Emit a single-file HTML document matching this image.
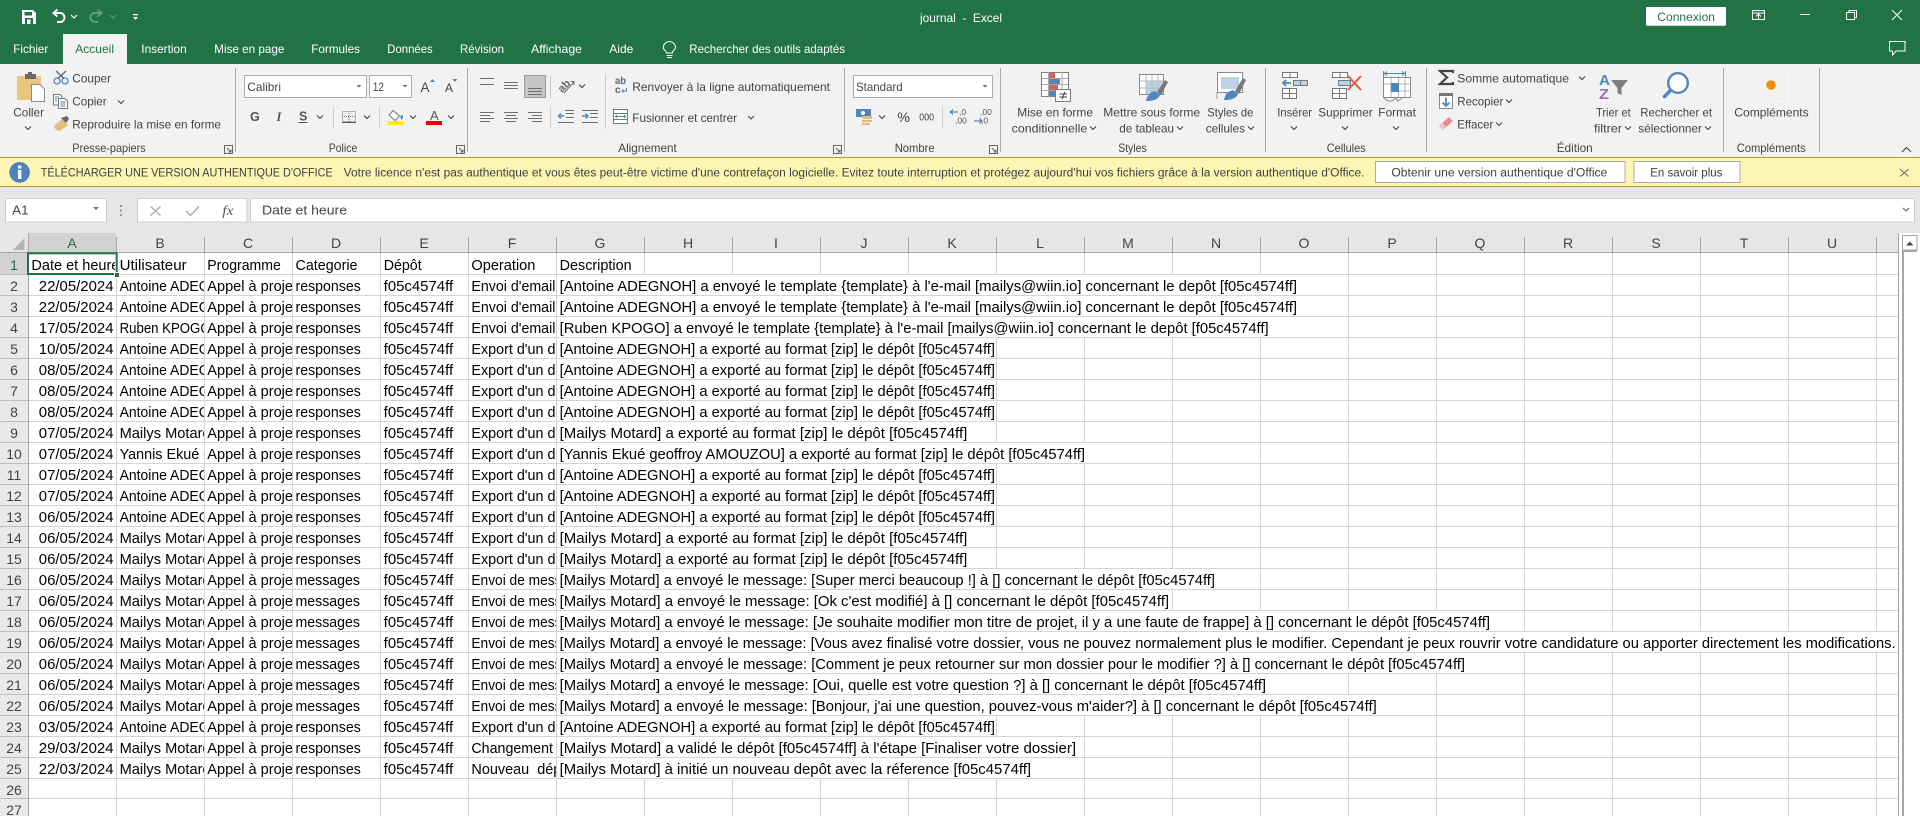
<!DOCTYPE html>
<html lang="fr">
<head>
<meta charset="utf-8">
<title>journal - Excel</title>
<style>
html,body{margin:0;padding:0;width:1920px;height:816px;overflow:hidden;background:#fff}
svg{display:block}
text{font-family:"Liberation Sans",sans-serif;white-space:pre}
.ui text{font-size:12px;fill:#444}
.grid text{font-size:14.4px;fill:#000}
.hd text{font-size:14px;fill:#444;text-anchor:middle}
</style>
</head>
<body>
<svg xmlns="http://www.w3.org/2000/svg" width="1920" height="816" viewBox="0 0 1920 816">
<defs>
<clipPath id="cA"><rect x="29" y="254" width="86" height="20"/></clipPath>
<clipPath id="cB"><rect x="117" y="254" width="87" height="525"/></clipPath>
<clipPath id="cC"><rect x="205" y="254" width="87" height="525"/></clipPath>
<clipPath id="cF"><rect x="469" y="254" width="87" height="525"/></clipPath>
</defs>

<!-- backgrounds -->
<rect width="1920" height="64" fill="#217346"/>
<rect y="64" width="1920" height="93" fill="#f2f2f2"/>
<rect x="63" y="34" width="64" height="30" fill="#f2f2f2"/>
<rect y="157" width="1920" height="30" fill="#fdf5b4"/>
<rect y="157" width="1920" height="1" fill="#b59a3c"/>
<rect y="186" width="1920" height="1" fill="#b59a3c"/>
<rect y="187" width="1920" height="46" fill="#e6e6e6"/>

<!-- title bar text and tabs -->
<g class="ui">
<g style="fill:#fff">
<text x="920" y="22" textLength="82" lengthAdjust="spacingAndGlyphs" fill="#fff" style="fill:#fff">journal  -  Excel</text>
<text x="13.3" y="53" textLength="35" lengthAdjust="spacingAndGlyphs" style="fill:#fff">Fichier</text>
<text x="141.3" y="53" textLength="45.4" lengthAdjust="spacingAndGlyphs" style="fill:#fff">Insertion</text>
<text x="214.3" y="53" textLength="70" lengthAdjust="spacingAndGlyphs" style="fill:#fff">Mise en page</text>
<text x="311.3" y="53" textLength="48.7" lengthAdjust="spacingAndGlyphs" style="fill:#fff">Formules</text>
<text x="387.3" y="53" textLength="45.4" lengthAdjust="spacingAndGlyphs" style="fill:#fff">Données</text>
<text x="460" y="53" textLength="44" lengthAdjust="spacingAndGlyphs" style="fill:#fff">Révision</text>
<text x="531" y="53" textLength="51" lengthAdjust="spacingAndGlyphs" style="fill:#fff">Affichage</text>
<text x="609.3" y="53" textLength="24" lengthAdjust="spacingAndGlyphs" style="fill:#fff">Aide</text>
<text x="689.3" y="53" textLength="155.7" lengthAdjust="spacingAndGlyphs" style="fill:#fff">Rechercher des outils adaptés</text>
</g>
<text x="75.3" y="53" textLength="38.7" lengthAdjust="spacingAndGlyphs" style="fill:#217346">Accueil</text>
<rect x="1646" y="7" width="80" height="18.7" fill="#fff" rx="1"/>
<text x="1657.3" y="21" textLength="57.7" lengthAdjust="spacingAndGlyphs" style="fill:#217346">Connexion</text>

<!-- clipboard labels -->
<text x="13.3" y="116.7" textLength="30.7" lengthAdjust="spacingAndGlyphs">Coller</text>
<text x="72.3" y="82.7" textLength="38.7" lengthAdjust="spacingAndGlyphs">Couper</text>
<text x="72.3" y="105.5" textLength="34.4" lengthAdjust="spacingAndGlyphs">Copier</text>
<text x="72.3" y="128.7" textLength="148.7" lengthAdjust="spacingAndGlyphs">Reproduire la mise en forme</text>
<text x="72.3" y="152" textLength="73.4" lengthAdjust="spacingAndGlyphs">Presse-papiers</text>
<!-- police -->
<rect x="244.5" y="75.5" width="122" height="22" fill="#fff" stroke="#ababab"/>
<rect x="369.5" y="75.5" width="42" height="22" fill="#fff" stroke="#ababab"/>
<text x="247.3" y="91" textLength="33.7" lengthAdjust="spacingAndGlyphs">Calibri</text>
<text x="372.7" y="91" textLength="11.3" lengthAdjust="spacingAndGlyphs">12</text>
<text x="420.5" y="92" style="font-size:14px" textLength="9" lengthAdjust="spacingAndGlyphs">A</text>
<text x="445" y="92" style="font-size:12px" textLength="8" lengthAdjust="spacingAndGlyphs">A</text>
<text x="250" y="121" style="font-size:12.5px;font-weight:bold;fill:#555">G</text>
<text x="276.5" y="121" style="font-size:12.5px;font-style:italic;fill:#555;font-family:'Liberation Serif',serif;font-weight:bold">I</text>
<text x="299" y="120.5" style="font-size:12.5px;font-weight:bold;fill:#555">S</text>
<text x="430" y="120" style="font-size:13px;fill:#555">A</text>
<text x="328.7" y="152" textLength="28.6" lengthAdjust="spacingAndGlyphs">Police</text>
<!-- alignment -->
<text x="632.3" y="91" textLength="197.7" lengthAdjust="spacingAndGlyphs">Renvoyer à la ligne automatiquement</text>
<text x="632.3" y="122" textLength="104.7" lengthAdjust="spacingAndGlyphs">Fusionner et centrer</text>
<text x="618.3" y="152" textLength="58.4" lengthAdjust="spacingAndGlyphs">Alignement</text>
<!-- number -->
<rect x="853.5" y="75.5" width="139" height="22" fill="#fff" stroke="#ababab"/>
<text x="856" y="91" textLength="46.7" lengthAdjust="spacingAndGlyphs">Standard</text>
<text x="897.3" y="122" style="font-size:14px" textLength="12.7" lengthAdjust="spacingAndGlyphs">%</text>
<text x="919.3" y="120.5" style="font-size:10px" textLength="14.7" lengthAdjust="spacingAndGlyphs">000</text>
<text x="894.7" y="152" textLength="40" lengthAdjust="spacingAndGlyphs">Nombre</text>
<!-- styles -->
<text x="1017.3" y="116.7" textLength="75.7" lengthAdjust="spacingAndGlyphs">Mise en forme</text>
<text x="1011.7" y="132.7" textLength="75.6" lengthAdjust="spacingAndGlyphs">conditionnelle</text>
<text x="1103.3" y="116.7" textLength="96.7" lengthAdjust="spacingAndGlyphs">Mettre sous forme</text>
<text x="1119.3" y="132.7" textLength="54.7" lengthAdjust="spacingAndGlyphs">de tableau</text>
<text x="1207.3" y="116.7" textLength="46" lengthAdjust="spacingAndGlyphs">Styles de</text>
<text x="1205.7" y="132.7" textLength="39.3" lengthAdjust="spacingAndGlyphs">cellules</text>
<text x="1118.3" y="152" textLength="28.4" lengthAdjust="spacingAndGlyphs">Styles</text>
<!-- cells -->
<text x="1277.3" y="116.7" textLength="34.7" lengthAdjust="spacingAndGlyphs">Insérer</text>
<text x="1318.3" y="116.7" textLength="54.4" lengthAdjust="spacingAndGlyphs">Supprimer</text>
<text x="1378.3" y="116.7" textLength="37.7" lengthAdjust="spacingAndGlyphs">Format</text>
<text x="1326.7" y="152" textLength="39" lengthAdjust="spacingAndGlyphs">Cellules</text>
<!-- editing -->
<text x="1457.3" y="82.7" textLength="111.7" lengthAdjust="spacingAndGlyphs">Somme automatique</text>
<text x="1457.3" y="105.5" textLength="46" lengthAdjust="spacingAndGlyphs">Recopier</text>
<text x="1457.3" y="128.7" textLength="36" lengthAdjust="spacingAndGlyphs">Effacer</text>
<text x="1596" y="116.7" textLength="34.7" lengthAdjust="spacingAndGlyphs">Trier et</text>
<text x="1594" y="132.7" textLength="28" lengthAdjust="spacingAndGlyphs">filtrer</text>
<text x="1640.3" y="116.7" textLength="71.7" lengthAdjust="spacingAndGlyphs">Rechercher et</text>
<text x="1638.3" y="132.7" textLength="63.7" lengthAdjust="spacingAndGlyphs">sélectionner</text>
<text x="1556.7" y="152" textLength="36" lengthAdjust="spacingAndGlyphs">Édition</text>
<text x="1734.3" y="116.7" textLength="74.4" lengthAdjust="spacingAndGlyphs">Compléments</text>
<text x="1736.7" y="152" textLength="69" lengthAdjust="spacingAndGlyphs">Compléments</text>

<!-- message bar -->
<text x="40.8" y="176.5" textLength="291.9" lengthAdjust="spacingAndGlyphs" style="font-size:11.5px;fill:#3f3f3f">TÉLÉCHARGER UNE VERSION AUTHENTIQUE D'OFFICE</text>
<text x="343.7" y="176.5" textLength="1020.8" lengthAdjust="spacingAndGlyphs" style="font-size:11.5px;fill:#3f3f3f">Votre licence n'est pas authentique et vous êtes peut-être victime d'une contrefaçon logicielle. Evitez toute interruption et protégez aujourd'hui vos fichiers grâce à la version authentique d'Office.</text>
<rect x="1375.5" y="161.5" width="249.5" height="21" fill="#fff" stroke="#ababab"/>
<rect x="1634" y="161.5" width="106" height="21" fill="#fff" stroke="#ababab"/>
<text x="1391.4" y="176.5" textLength="215.9" lengthAdjust="spacingAndGlyphs" style="font-size:11.5px;fill:#3f3f3f">Obtenir une version authentique d'Office</text>
<text x="1650.2" y="176.5" textLength="72.2" lengthAdjust="spacingAndGlyphs" style="font-size:11.5px;fill:#3f3f3f">En savoir plus</text>

<!-- formula bar -->
<rect x="5.5" y="198.5" width="101" height="23.5" fill="#fff" stroke="#cfcfcf"/>
<rect x="137.5" y="198.5" width="109.5" height="23.5" fill="#fff" stroke="#cfcfcf"/>
<rect x="250.5" y="198.5" width="1664" height="23.5" fill="#fff" stroke="#cfcfcf"/>
<text x="12.2" y="214.5" textLength="16.4" lengthAdjust="spacingAndGlyphs" style="font-size:13px">A1</text>
<text x="262" y="214.5" textLength="85" lengthAdjust="spacingAndGlyphs" style="font-size:13px">Date et heure</text>
<text x="222.4" y="215" textLength="11" lengthAdjust="spacingAndGlyphs" style="font-size:14px;font-style:italic;font-family:'Liberation Serif',serif;fill:#555">fx</text>
</g>

<!-- separators -->
<path shape-rendering="crispEdges" stroke="#a8a8a8" fill="none" d="M235.5 68V152M467.5 68V152M844.5 68V152M1000.5 68V152M1265.5 68V152M1426.5 68V152M1723.5 68V152M1819.5 68V152"/>
<path shape-rendering="crispEdges" stroke="#cdcdcd" fill="none" d="M333.5 107V128M379.5 107V128M550.5 76V98M550.5 107V128M605.5 74V129M942.5 107V128"/>

<!-- title icons -->
<path fill="#fff" d="M22 10H33L36 13V24H22z"/>
<path fill="#217346" d="M24.5 12H32V15.5H24.5zM25 18H33V24H25z"/>
<path fill="#fff" d="M27 19.5H30.5V24H27z"/>
<path fill="none" stroke="#fff" stroke-width="2" d="M54 13H60A4.5 4.5 0 0 1 60 22H57M57.5 9.5L53.5 13L57.5 16.5"/>
<path fill="none" stroke="#5f9c7c" stroke-width="2" d="M101 13H95A4.5 4.5 0 0 0 95 22H98M97.5 9.5L101.5 13L97.5 16.5"/>
<path fill="none" stroke="#fff" stroke-width="1.2" d="M71 15l3 3 3-3"/>
<path fill="none" stroke="#5f9c7c" stroke-width="1.2" d="M110 15l3 3 3-3"/>
<path fill="#fff" d="M133 14h5v1.2h-5zM133 17h5l-2.5 3z"/>
<path fill="none" stroke="#fff" d="M1752.5 10.5H1764.5V19.5H1752.5zM1752.5 13H1764.5M1758.5 19V14.5M1756 16.5L1758.5 14L1761 16.5"/>
<path fill="none" stroke="#fff" d="M1800 14.5H1810M1846.5 12.5H1854.5V19.5H1846.5zM1849 12V10.5H1856.5V17.5H1855M1892 10L1902 20M1902 10L1892 20"/>
<path fill="none" stroke="#fff" d="M1889.5 41.5H1905V51H1896L1892.5 55V51H1889.5z"/>
<path fill="none" stroke="#fff" d="M666.5 55.5H672.5M667 57.5H672M666.5 53C666.5 50.5 663.3 50 663.3 47.7A6.1 6.1 0 0 1 675.5 47.7C675.5 50 672.3 50.5 672.3 53z"/>

<!-- paste -->
<path fill="#eac57f" d="M17 76H41V100H17z"/>
<path fill="#6b6b6b" d="M25 74H28V72H32V74H36V79H25z"/>
<path fill="#fff" stroke="#8a8a8a" d="M31.5 84.5H40L44.5 89V101.5H31.5z"/>
<!-- scissors -->
<circle cx="57" cy="81" r="3" fill="none" stroke="#4e86be" stroke-width="1.3"/>
<circle cx="65" cy="81" r="3" fill="none" stroke="#4e86be" stroke-width="1.3"/>
<path fill="none" stroke="#6b6b6b" stroke-width="1.5" d="M58 78.5L66 71M64 78.5L56 71"/>
<!-- copy -->
<path fill="#fff" stroke="#777" d="M53.5 94.5H60L62 96.5V105H53.5z"/>
<path fill="#fff" stroke="#777" d="M58.5 98.5H65L67.5 101V108.5H58.5z"/>
<path stroke="#4e86be" fill="none" d="M60.5 102H65.5M60.5 104H65.5M60.5 106H65.5M55 97H59M55 99H57M55 101H57"/>
<!-- painter -->
<path fill="#e3bb7b" d="M54 126L62 119L68 125L60 131L56 130z"/>
<path fill="#666" d="M61 118L67 116L69 119L66 123z"/>

<!-- font size arrows -->
<path fill="#4e86be" d="M430 82h5l-2.5-3zM452.5 79h5l-2.5 3z"/>
<path stroke="#555" d="M298.5 122.5H307.5" fill="none"/>
<!-- border icon -->
<path fill="none" stroke="#777" stroke-dasharray="1 1" d="M342.5 111.5H355.5V121.5H342.5zM349 111V122M342 116.5H356"/>
<path stroke="#555" fill="none" d="M342 122.5H356"/>
<!-- fill colour -->
<path fill="#fff" stroke="#777" d="M393 110.5L399.5 116L395 120.5L389 115z"/>
<path fill="#4e86be" d="M400 116l3-1 0 3-1.5 2z"/>
<rect x="387.5" y="121" width="16" height="4" fill="#ffee00"/>
<rect x="426" y="121" width="16" height="4" fill="#ee0000"/>

<!-- chevrons -->
<path fill="none" stroke="#444" stroke-width="1.1" d="M25 126.5l3 3 3-3M118 100.5l3 3 3-3M317 115.5l3 3 3-3M364 115.5l3 3 3-3M410 115.5l3 3 3-3M448 115.5l3 3 3-3M579 84.5l3 3 3-3M748 116l3 3 3-3M879 115.5l3 3 3-3M1090 126.5l3 3 3-3M1177 126.5l3 3 3-3M1248 126.5l3 3 3-3M1291 126.5l3 3 3-3M1342 126.5l3 3 3-3M1393 126.5l3 3 3-3M1579 76.5l3 3 3-3M1506 99.5l3 3 3-3M1496 122.5l3 3 3-3M1625 126.5l3 3 3-3M1705 126.5l3 3 3-3M1902 152l4.5-4.5 4.5 4.5"/>
<!-- combo arrows -->
<path fill="#6e6e6e" d="M356.5 85h5l-2.5 2.5zM402.5 85h5l-2.5 2.5zM982.5 85h5l-2.5 2.5zM93 207h6l-3 3z"/>
<!-- launchers -->
<path fill="none" stroke="#666" d="M224.5 145.5H232.5V153.5H224.5zM227 148L231 152M231 149.5V152H228.5M456.5 145.5H464.5V153.5H456.5zM459 148L463 152M463 149.5V152H460.5M833.5 145.5H841.5V153.5H833.5zM836 148L840 152M840 149.5V152H837.5M989.5 145.5H997.5V153.5H989.5zM992 148L996 152M996 149.5V152H993.5"/>

<!-- alignment icons -->
<rect x="524.5" y="75.5" width="21" height="22" fill="#c6c6c6" stroke="#9a9a9a"/>
<path shape-rendering="crispEdges" fill="none" stroke="#6e6e6e" d="M480 78.5H494M480 84.5H494M504 82.5H518M504 85.5H518M504 88.5H518M528 88.5H542M528 91.5H542M528 94.5H542M480 112.5H494M480 115.5H490M480 118.5H494M480 121.5H490M504 112.5H518M506 115.5H516M504 118.5H518M506 121.5H516M528 112.5H542M532 115.5H542M528 118.5H542M532 121.5H542M565 110.5H574M566 113.5H574M566 117.5H574M558 122.5H574M582 110.5H598M590 113.5H598M590 117.5H598M582 122.5H598"/>
<path fill="none" stroke="#4e86be" stroke-width="1.5" d="M558 116H564M561 113.5L558.5 116L561 118.5M582 116H588M585.5 113.5L588 116L585.5 118.5"/>
<text x="0" y="0" transform="translate(562 93) rotate(-45)" style="font-size:11px;font-weight:bold;fill:#666">ab</text>
<path stroke="#666" fill="none" d="M564 93L574 82M570.5 81.5H574V85"/>
<text x="615" y="84" style="font-size:10px;font-weight:bold;fill:#666" textLength="11" lengthAdjust="spacingAndGlyphs">ab</text>
<text x="615" y="93" style="font-size:10px;font-weight:bold;fill:#666">c</text>
<path fill="none" stroke="#4e86be" d="M626.5 88V91H622M623.5 89.5L622 91L623.5 92.5"/>
<path fill="#fff" stroke="#777" d="M613.5 109.5H627.5V123.5H613.5zM613.5 113.5H627.5M613.5 119.5H627.5"/>
<path fill="none" stroke="#4e86be" d="M615.5 116.5H625.5M617 115L615.5 116.5L617 118M624 115L625.5 116.5L624 118"/>
<!-- currency and decimals -->
<rect x="856" y="109" width="15" height="8" fill="#4e86be"/><circle cx="863" cy="113" r="2" fill="#fff"/>
<path fill="#e3bb7b" d="M862 116H872V119H862zM862 120H872V122H862zM862 123H870V125H862z"/>
<text x="959" y="115" style="font-size:8.5px;fill:#555">,0</text>
<text x="955" y="123.5" style="font-size:8.5px;fill:#555">,00</text>
<text x="980" y="115" style="font-size:8.5px;fill:#555">,00</text>
<text x="981" y="123.5" style="font-size:8.5px;fill:#555">,0</text>
<path fill="none" stroke="#4e86be" stroke-width="1.3" d="M950 112H958M953 109.5L950.5 112L953 114.5M974 121H982M979.5 118.5L982 121L979.5 123.5"/>

<!-- conditional format -->
<rect x="1041.5" y="72.5" width="27" height="24" fill="#fff" stroke="#7f7f7f"/>
<path fill="#d9634c" d="M1049 73H1055V78H1049zM1049 85H1058V90H1049z"/>
<path fill="#4e86be" d="M1049 79H1060V84H1049zM1049 91H1055V96H1049z"/>
<path fill="none" stroke="#a9a9a9" d="M1048.5 72V97M1062 72V97M1042 78.5H1068M1042 84.5H1068M1042 90.5H1068"/>
<rect x="1055.5" y="89.5" width="15" height="12" fill="#fff" stroke="#7f7f7f"/>
<path fill="none" stroke="#444" d="M1059.5 94H1067M1059.5 97H1067M1065 92L1062 99"/>
<!-- table style -->
<rect x="1139.5" y="74.5" width="24" height="20" fill="#fff" stroke="#8a8a8a"/>
<rect x="1146" y="81" width="17" height="13" fill="#bcd2e8"/>
<path fill="none" stroke="#b9b9b9" d="M1146 75V94M1152 75V94M1158 75V94M1140 81H1163M1140 88H1163"/>
<path fill="#777" d="M1157 92L1165 80L1168 82L1161 95z"/>
<path fill="#4e86be" d="M1146 101C1147 96 1150 92 1155 91L1160 95C1158 99 1155 101 1146 101z"/>
<!-- cell style -->
<rect x="1217.5" y="72.5" width="25" height="20" fill="#fff" stroke="#8a8a8a"/>
<rect x="1221" y="77" width="18" height="12" fill="#bcd2e8"/>
<path fill="none" stroke="#9a9a9a" d="M1217 92V99M1226 93V99"/>
<path fill="#777" d="M1235 91L1243 78L1246 80L1239 94z"/>
<path fill="#4e86be" d="M1224 100C1225 95 1228 91 1233 90L1238 94C1236 98 1233 100 1224 100z"/>
<!-- insert -->
<path fill="#fff" stroke="#777" d="M1282.5 72.5H1297.5V77.5H1282.5zM1290 72.5V77.5M1282.5 88.5H1296.5V98.5H1282.5zM1289.5 88.5V98.5M1282.5 93.5H1296.5"/>
<path fill="#bcd2e8" stroke="#777" d="M1293.5 80.5H1307.5V85.5H1293.5zM1300.5 80.5V85.5"/>
<path fill="none" stroke="#4e86be" stroke-width="1.8" d="M1283 83H1291M1286 80L1283 83L1286 86"/>
<!-- delete -->
<path fill="#fff" stroke="#777" d="M1332.5 72.5H1347.5V77.5H1332.5zM1340 72.5V77.5M1332.5 88.5H1346.5V98.5H1332.5zM1339.5 88.5V98.5M1332.5 93.5H1346.5"/>
<path fill="#bcd2e8" stroke="#777" d="M1338.5 80.5H1350.5V85.5H1338.5z"/>
<path fill="none" stroke="#dd5b3f" stroke-width="2" d="M1348 76L1361 90M1361 76L1348 90"/>
<!-- format -->
<path fill="none" stroke="#4e86be" d="M1383.5 71V77M1405.5 71V77M1384 73.5H1405M1387 71.5L1384.5 73.5L1387 75.5M1402 71.5L1404.5 73.5L1402 75.5"/>
<rect x="1383.5" y="77.5" width="27" height="20" fill="#fff" stroke="#8a8a8a"/>
<path fill="none" stroke="#b5b5b5" d="M1391 78V97M1398.5 78V97M1405 78V97M1384 84H1410M1391 91H1410"/>
<rect x="1391" y="83" width="8" height="9" fill="#4e86be"/>
<path fill="none" stroke="#8a8a8a" d="M1384 98L1388 101H1392L1396 98L1398 101L1402 98"/>
<!-- sigma -->
<path fill="none" stroke="#444" stroke-width="2.2" d="M1453 73V71H1440L1447 77.5L1440 84H1453V82"/>
<!-- fill down -->
<rect x="1439.5" y="93.5" width="13" height="15" fill="#fff" stroke="#8a8a8a"/>
<rect x="1439" y="93" width="14" height="3" fill="#777"/>
<path fill="none" stroke="#4e86be" stroke-width="1.8" d="M1446 97.5V106M1442.5 102.5L1446 106L1449.5 102.5"/>
<!-- eraser -->
<path fill="#ea8a98" d="M1439 126L1449 117L1453 121L1443 130z"/>
<path fill="#f3c1c9" d="M1439 126L1442.5 123L1446 127L1443 130z"/>
<!-- sort -->
<text x="1599" y="85" style="font-size:15px;font-weight:bold;fill:#4e86be" textLength="11" lengthAdjust="spacingAndGlyphs">A</text>
<text x="1599" y="99" style="font-size:15px;font-weight:bold;fill:#9b6fb5" textLength="10" lengthAdjust="spacingAndGlyphs">Z</text>
<path fill="#7f7f7f" d="M1611 80H1628L1621.5 88V95L1617.5 93V88z"/>
<!-- find -->
<circle cx="1678" cy="83" r="9.8" fill="#fff" stroke="#4e86be" stroke-width="2.4"/>
<path fill="none" stroke="#4e86be" stroke-width="3.5" stroke-linecap="round" d="M1670.5 90.5L1664.5 96.5"/>
<!-- add-ins -->
<circle cx="1771" cy="85" r="4.8" fill="#f28c0f"/>
<path fill="none" stroke="#fafafa" d="M1787.5 74V102M1770 101.5H1787"/>

<!-- message bar icons -->
<circle cx="19.6" cy="172.3" r="10.3" fill="#4f81bd"/>
<rect x="18" y="170" width="3.4" height="9" fill="#fff"/>
<rect x="18" y="165.5" width="3.4" height="3" fill="#fff"/>
<path fill="none" stroke="#6e6e6e" d="M1900 169L1908.5 176.5M1908.5 169L1900 176.5"/>
<!-- formula icons -->
<path fill="#999" d="M120 205h2v2h-2zM120 209.5h2v2h-2zM120 214h2v2h-2z"/>
<path fill="none" stroke="#a9a9a9" stroke-width="1.3" d="M150.5 206.5L160.5 215.5M160.5 206.5L150.5 215.5M186 211L190.5 215.5L199 206.5"/>
<path fill="none" stroke="#777" stroke-width="1.3" d="M1903 208l3 3 3-3"/>

<!-- sheet -->
<rect x="0" y="233" width="1898" height="20" fill="#e6e6e6"/>
<rect x="0" y="253" width="28" height="563" fill="#e9e9e9"/>
<rect x="29" y="233" width="87" height="20" fill="#d2d2d2"/>
<rect x="0" y="253" width="28" height="21" fill="#d2d2d2"/>
<path fill="#b4b4b4" d="M24.5 238V250H13z"/>
<path shape-rendering="crispEdges" fill="none" stroke="#d4d4d4" d="M116.5 253V816M204.5 253V816M292.5 253V816M380.5 253V816M468.5 253V816M556.5 253V816M644.5 253V816M732.5 253V816M820.5 253V816M908.5 253V816M996.5 253V816M1084.5 253V816M1172.5 253V816M1260.5 253V816M1348.5 253V816M1436.5 253V816M1524.5 253V816M1612.5 253V816M1700.5 253V816M1788.5 253V816M1876.5 253V816
M29 274.5H1898M29 295.5H1898M29 316.5H1898M29 337.5H1898M29 358.5H1898M29 379.5H1898M29 400.5H1898M29 421.5H1898M29 442.5H1898M29 463.5H1898M29 484.5H1898M29 505.5H1898M29 526.5H1898M29 547.5H1898M29 568.5H1898M29 589.5H1898M29 610.5H1898M29 631.5H1898M29 652.5H1898M29 673.5H1898M29 694.5H1898M29 715.5H1898M29 736.5H1898M29 757.5H1898M29 778.5H1898M29 798.5H1898"/>
<path shape-rendering="crispEdges" fill="none" stroke="#bdbdbd" d="M0 274.5H28M0 295.5H28M0 316.5H28M0 337.5H28M0 358.5H28M0 379.5H28M0 400.5H28M0 421.5H28M0 442.5H28M0 463.5H28M0 484.5H28M0 505.5H28M0 526.5H28M0 547.5H28M0 568.5H28M0 589.5H28M0 610.5H28M0 631.5H28M0 652.5H28M0 673.5H28M0 694.5H28M0 715.5H28M0 736.5H28M0 757.5H28M0 778.5H28M0 798.5H28"/>
<path shape-rendering="crispEdges" fill="none" stroke="#a6a6a6" d="M28.5 233V816M0 252.5H1898M116.5 237V253M204.5 237V253M292.5 237V253M380.5 237V253M468.5 237V253M556.5 237V253M644.5 237V253M732.5 237V253M820.5 237V253M908.5 237V253M996.5 237V253M1084.5 237V253M1172.5 237V253M1260.5 237V253M1348.5 237V253M1436.5 237V253M1524.5 237V253M1612.5 237V253M1700.5 237V253M1788.5 237V253M1876.5 237V253M1898.5 233V816"/>
<!-- overflow masks -->
<path fill="#fff" d="M557 275H1347v20H557zM557 296H1347v20H557zM557 317H1347v20H557zM557 338H995v20H557zM557 359H995v20H557zM557 380H995v20H557zM557 401H995v20H557zM557 422H995v20H557zM557 443H1171v20H557zM557 464H995v20H557zM557 485H995v20H557zM557 506H995v20H557zM557 527H995v20H557zM557 548H995v20H557zM557 569H1259v20H557zM557 590H1171v20H557zM557 611H1523v20H557zM557 632H1897v20H557zM557 653H1523v20H557zM557 674H1347v20H557zM557 695H1435v20H557zM557 716H995v20H557zM557 737H1083v20H557zM557 758H1083v20H557z"/>

<!-- headers -->
<g class="hd">
<text x="72" y="248" style="fill:#1e6b41">A</text><text x="160" y="248">B</text><text x="248" y="248">C</text><text x="336" y="248">D</text><text x="424" y="248">E</text><text x="512" y="248">F</text><text x="600" y="248">G</text><text x="688" y="248">H</text><text x="776" y="248">I</text><text x="864" y="248">J</text><text x="952" y="248">K</text><text x="1040" y="248">L</text><text x="1128" y="248">M</text><text x="1216" y="248">N</text><text x="1304" y="248">O</text><text x="1392" y="248">P</text><text x="1480" y="248">Q</text><text x="1568" y="248">R</text><text x="1656" y="248">S</text><text x="1744" y="248">T</text><text x="1832" y="248">U</text>
<text x="14" y="270" style="fill:#1e6b41">1</text><text x="14" y="291">2</text><text x="14" y="312">3</text><text x="14" y="333">4</text><text x="14" y="354">5</text><text x="14" y="375">6</text><text x="14" y="396">7</text><text x="14" y="417">8</text><text x="14" y="438">9</text><text x="14" y="459">10</text><text x="14" y="480">11</text><text x="14" y="501">12</text><text x="14" y="522">13</text><text x="14" y="543">14</text><text x="14" y="564">15</text><text x="14" y="585">16</text><text x="14" y="606">17</text><text x="14" y="627">18</text><text x="14" y="648">19</text><text x="14" y="669">20</text><text x="14" y="690">21</text><text x="14" y="711">22</text><text x="14" y="732">23</text><text x="14" y="753">24</text><text x="14" y="774">25</text><text x="14" y="795">26</text><text x="14" y="815">27</text>
</g>

<g class="grid">
<!-- row 1 -->
<g clip-path="url(#cA)"><text x="31.4" y="270" textLength="88" lengthAdjust="spacingAndGlyphs">Date et heure</text></g>
<text x="119.6" y="270" textLength="67" lengthAdjust="spacingAndGlyphs">Utilisateur</text>
<text x="207.3" y="270" textLength="73.5" lengthAdjust="spacingAndGlyphs">Programme</text>
<text x="295.5" y="270" textLength="62" lengthAdjust="spacingAndGlyphs">Categorie</text>
<text x="383.7" y="270" textLength="38" lengthAdjust="spacingAndGlyphs">Dépôt</text>
<text x="471.4" y="270" textLength="64" lengthAdjust="spacingAndGlyphs">Operation</text>
<text x="559.6" y="270" textLength="72" lengthAdjust="spacingAndGlyphs">Description</text>

<!-- dates -->
<text x="38.8" y="291" textLength="74.7" lengthAdjust="spacingAndGlyphs">22/05/2024</text>
<text x="38.8" y="312" textLength="74.7" lengthAdjust="spacingAndGlyphs">22/05/2024</text>
<text x="38.8" y="333" textLength="74.7" lengthAdjust="spacingAndGlyphs">17/05/2024</text>
<text x="38.8" y="354" textLength="74.7" lengthAdjust="spacingAndGlyphs">10/05/2024</text>
<text x="38.8" y="375" textLength="74.7" lengthAdjust="spacingAndGlyphs">08/05/2024</text>
<text x="38.8" y="396" textLength="74.7" lengthAdjust="spacingAndGlyphs">08/05/2024</text>
<text x="38.8" y="417" textLength="74.7" lengthAdjust="spacingAndGlyphs">08/05/2024</text>
<text x="38.8" y="438" textLength="74.7" lengthAdjust="spacingAndGlyphs">07/05/2024</text>
<text x="38.8" y="459" textLength="74.7" lengthAdjust="spacingAndGlyphs">07/05/2024</text>
<text x="38.8" y="480" textLength="74.7" lengthAdjust="spacingAndGlyphs">07/05/2024</text>
<text x="38.8" y="501" textLength="74.7" lengthAdjust="spacingAndGlyphs">07/05/2024</text>
<text x="38.8" y="522" textLength="74.7" lengthAdjust="spacingAndGlyphs">06/05/2024</text>
<text x="38.8" y="543" textLength="74.7" lengthAdjust="spacingAndGlyphs">06/05/2024</text>
<text x="38.8" y="564" textLength="74.7" lengthAdjust="spacingAndGlyphs">06/05/2024</text>
<text x="38.8" y="585" textLength="74.7" lengthAdjust="spacingAndGlyphs">06/05/2024</text>
<text x="38.8" y="606" textLength="74.7" lengthAdjust="spacingAndGlyphs">06/05/2024</text>
<text x="38.8" y="627" textLength="74.7" lengthAdjust="spacingAndGlyphs">06/05/2024</text>
<text x="38.8" y="648" textLength="74.7" lengthAdjust="spacingAndGlyphs">06/05/2024</text>
<text x="38.8" y="669" textLength="74.7" lengthAdjust="spacingAndGlyphs">06/05/2024</text>
<text x="38.8" y="690" textLength="74.7" lengthAdjust="spacingAndGlyphs">06/05/2024</text>
<text x="38.8" y="711" textLength="74.7" lengthAdjust="spacingAndGlyphs">06/05/2024</text>
<text x="38.8" y="732" textLength="74.7" lengthAdjust="spacingAndGlyphs">03/05/2024</text>
<text x="38.8" y="753" textLength="74.7" lengthAdjust="spacingAndGlyphs">29/03/2024</text>
<text x="38.8" y="774" textLength="74.7" lengthAdjust="spacingAndGlyphs">22/03/2024</text>

<!-- users -->
<g clip-path="url(#cB)">
<text x="119.6" y="291" textLength="121" lengthAdjust="spacingAndGlyphs">Antoine ADEGNOH</text>
<text x="119.6" y="312" textLength="121" lengthAdjust="spacingAndGlyphs">Antoine ADEGNOH</text>
<text x="119.6" y="333" textLength="91" lengthAdjust="spacingAndGlyphs">Ruben KPOGO</text>
<text x="119.6" y="354" textLength="121" lengthAdjust="spacingAndGlyphs">Antoine ADEGNOH</text>
<text x="119.6" y="375" textLength="121" lengthAdjust="spacingAndGlyphs">Antoine ADEGNOH</text>
<text x="119.6" y="396" textLength="121" lengthAdjust="spacingAndGlyphs">Antoine ADEGNOH</text>
<text x="119.6" y="417" textLength="121" lengthAdjust="spacingAndGlyphs">Antoine ADEGNOH</text>
<text x="119.6" y="438" textLength="91" lengthAdjust="spacingAndGlyphs">Mailys Motard</text>
<text x="119.6" y="459" textLength="212" lengthAdjust="spacingAndGlyphs">Yannis Ekué geoffroy AMOUZOU</text>
<text x="119.6" y="480" textLength="121" lengthAdjust="spacingAndGlyphs">Antoine ADEGNOH</text>
<text x="119.6" y="501" textLength="121" lengthAdjust="spacingAndGlyphs">Antoine ADEGNOH</text>
<text x="119.6" y="522" textLength="121" lengthAdjust="spacingAndGlyphs">Antoine ADEGNOH</text>
<text x="119.6" y="543" textLength="91" lengthAdjust="spacingAndGlyphs">Mailys Motard</text>
<text x="119.6" y="564" textLength="91" lengthAdjust="spacingAndGlyphs">Mailys Motard</text>
<text x="119.6" y="585" textLength="91" lengthAdjust="spacingAndGlyphs">Mailys Motard</text>
<text x="119.6" y="606" textLength="91" lengthAdjust="spacingAndGlyphs">Mailys Motard</text>
<text x="119.6" y="627" textLength="91" lengthAdjust="spacingAndGlyphs">Mailys Motard</text>
<text x="119.6" y="648" textLength="91" lengthAdjust="spacingAndGlyphs">Mailys Motard</text>
<text x="119.6" y="669" textLength="91" lengthAdjust="spacingAndGlyphs">Mailys Motard</text>
<text x="119.6" y="690" textLength="91" lengthAdjust="spacingAndGlyphs">Mailys Motard</text>
<text x="119.6" y="711" textLength="91" lengthAdjust="spacingAndGlyphs">Mailys Motard</text>
<text x="119.6" y="732" textLength="121" lengthAdjust="spacingAndGlyphs">Antoine ADEGNOH</text>
<text x="119.6" y="753" textLength="91" lengthAdjust="spacingAndGlyphs">Mailys Motard</text>
<text x="119.6" y="774" textLength="91" lengthAdjust="spacingAndGlyphs">Mailys Motard</text>
</g>

<!-- programme -->
<g clip-path="url(#cC)">
<text x="207.3" y="291" textLength="97" lengthAdjust="spacingAndGlyphs">Appel à projets</text>
<text x="207.3" y="312" textLength="97" lengthAdjust="spacingAndGlyphs">Appel à projets</text>
<text x="207.3" y="333" textLength="97" lengthAdjust="spacingAndGlyphs">Appel à projets</text>
<text x="207.3" y="354" textLength="97" lengthAdjust="spacingAndGlyphs">Appel à projets</text>
<text x="207.3" y="375" textLength="97" lengthAdjust="spacingAndGlyphs">Appel à projets</text>
<text x="207.3" y="396" textLength="97" lengthAdjust="spacingAndGlyphs">Appel à projets</text>
<text x="207.3" y="417" textLength="97" lengthAdjust="spacingAndGlyphs">Appel à projets</text>
<text x="207.3" y="438" textLength="97" lengthAdjust="spacingAndGlyphs">Appel à projets</text>
<text x="207.3" y="459" textLength="97" lengthAdjust="spacingAndGlyphs">Appel à projets</text>
<text x="207.3" y="480" textLength="97" lengthAdjust="spacingAndGlyphs">Appel à projets</text>
<text x="207.3" y="501" textLength="97" lengthAdjust="spacingAndGlyphs">Appel à projets</text>
<text x="207.3" y="522" textLength="97" lengthAdjust="spacingAndGlyphs">Appel à projets</text>
<text x="207.3" y="543" textLength="97" lengthAdjust="spacingAndGlyphs">Appel à projets</text>
<text x="207.3" y="564" textLength="97" lengthAdjust="spacingAndGlyphs">Appel à projets</text>
<text x="207.3" y="585" textLength="97" lengthAdjust="spacingAndGlyphs">Appel à projets</text>
<text x="207.3" y="606" textLength="97" lengthAdjust="spacingAndGlyphs">Appel à projets</text>
<text x="207.3" y="627" textLength="97" lengthAdjust="spacingAndGlyphs">Appel à projets</text>
<text x="207.3" y="648" textLength="97" lengthAdjust="spacingAndGlyphs">Appel à projets</text>
<text x="207.3" y="669" textLength="97" lengthAdjust="spacingAndGlyphs">Appel à projets</text>
<text x="207.3" y="690" textLength="97" lengthAdjust="spacingAndGlyphs">Appel à projets</text>
<text x="207.3" y="711" textLength="97" lengthAdjust="spacingAndGlyphs">Appel à projets</text>
<text x="207.3" y="732" textLength="97" lengthAdjust="spacingAndGlyphs">Appel à projets</text>
<text x="207.3" y="753" textLength="97" lengthAdjust="spacingAndGlyphs">Appel à projets</text>
<text x="207.3" y="774" textLength="97" lengthAdjust="spacingAndGlyphs">Appel à projets</text>
</g>

<!-- category -->
<text x="295.5" y="291" textLength="65.3" lengthAdjust="spacingAndGlyphs">responses</text>
<text x="295.5" y="312" textLength="65.3" lengthAdjust="spacingAndGlyphs">responses</text>
<text x="295.5" y="333" textLength="65.3" lengthAdjust="spacingAndGlyphs">responses</text>
<text x="295.5" y="354" textLength="65.3" lengthAdjust="spacingAndGlyphs">responses</text>
<text x="295.5" y="375" textLength="65.3" lengthAdjust="spacingAndGlyphs">responses</text>
<text x="295.5" y="396" textLength="65.3" lengthAdjust="spacingAndGlyphs">responses</text>
<text x="295.5" y="417" textLength="65.3" lengthAdjust="spacingAndGlyphs">responses</text>
<text x="295.5" y="438" textLength="65.3" lengthAdjust="spacingAndGlyphs">responses</text>
<text x="295.5" y="459" textLength="65.3" lengthAdjust="spacingAndGlyphs">responses</text>
<text x="295.5" y="480" textLength="65.3" lengthAdjust="spacingAndGlyphs">responses</text>
<text x="295.5" y="501" textLength="65.3" lengthAdjust="spacingAndGlyphs">responses</text>
<text x="295.5" y="522" textLength="65.3" lengthAdjust="spacingAndGlyphs">responses</text>
<text x="295.5" y="543" textLength="65.3" lengthAdjust="spacingAndGlyphs">responses</text>
<text x="295.5" y="564" textLength="65.3" lengthAdjust="spacingAndGlyphs">responses</text>
<text x="295.5" y="585" textLength="64.5" lengthAdjust="spacingAndGlyphs">messages</text>
<text x="295.5" y="606" textLength="64.5" lengthAdjust="spacingAndGlyphs">messages</text>
<text x="295.5" y="627" textLength="64.5" lengthAdjust="spacingAndGlyphs">messages</text>
<text x="295.5" y="648" textLength="64.5" lengthAdjust="spacingAndGlyphs">messages</text>
<text x="295.5" y="669" textLength="64.5" lengthAdjust="spacingAndGlyphs">messages</text>
<text x="295.5" y="690" textLength="64.5" lengthAdjust="spacingAndGlyphs">messages</text>
<text x="295.5" y="711" textLength="64.5" lengthAdjust="spacingAndGlyphs">messages</text>
<text x="295.5" y="732" textLength="65.3" lengthAdjust="spacingAndGlyphs">responses</text>
<text x="295.5" y="753" textLength="65.3" lengthAdjust="spacingAndGlyphs">responses</text>
<text x="295.5" y="774" textLength="65.3" lengthAdjust="spacingAndGlyphs">responses</text>

<!-- depot -->
<text x="383.7" y="291" textLength="69.4" lengthAdjust="spacingAndGlyphs">f05c4574ff</text>
<text x="383.7" y="312" textLength="69.4" lengthAdjust="spacingAndGlyphs">f05c4574ff</text>
<text x="383.7" y="333" textLength="69.4" lengthAdjust="spacingAndGlyphs">f05c4574ff</text>
<text x="383.7" y="354" textLength="69.4" lengthAdjust="spacingAndGlyphs">f05c4574ff</text>
<text x="383.7" y="375" textLength="69.4" lengthAdjust="spacingAndGlyphs">f05c4574ff</text>
<text x="383.7" y="396" textLength="69.4" lengthAdjust="spacingAndGlyphs">f05c4574ff</text>
<text x="383.7" y="417" textLength="69.4" lengthAdjust="spacingAndGlyphs">f05c4574ff</text>
<text x="383.7" y="438" textLength="69.4" lengthAdjust="spacingAndGlyphs">f05c4574ff</text>
<text x="383.7" y="459" textLength="69.4" lengthAdjust="spacingAndGlyphs">f05c4574ff</text>
<text x="383.7" y="480" textLength="69.4" lengthAdjust="spacingAndGlyphs">f05c4574ff</text>
<text x="383.7" y="501" textLength="69.4" lengthAdjust="spacingAndGlyphs">f05c4574ff</text>
<text x="383.7" y="522" textLength="69.4" lengthAdjust="spacingAndGlyphs">f05c4574ff</text>
<text x="383.7" y="543" textLength="69.4" lengthAdjust="spacingAndGlyphs">f05c4574ff</text>
<text x="383.7" y="564" textLength="69.4" lengthAdjust="spacingAndGlyphs">f05c4574ff</text>
<text x="383.7" y="585" textLength="69.4" lengthAdjust="spacingAndGlyphs">f05c4574ff</text>
<text x="383.7" y="606" textLength="69.4" lengthAdjust="spacingAndGlyphs">f05c4574ff</text>
<text x="383.7" y="627" textLength="69.4" lengthAdjust="spacingAndGlyphs">f05c4574ff</text>
<text x="383.7" y="648" textLength="69.4" lengthAdjust="spacingAndGlyphs">f05c4574ff</text>
<text x="383.7" y="669" textLength="69.4" lengthAdjust="spacingAndGlyphs">f05c4574ff</text>
<text x="383.7" y="690" textLength="69.4" lengthAdjust="spacingAndGlyphs">f05c4574ff</text>
<text x="383.7" y="711" textLength="69.4" lengthAdjust="spacingAndGlyphs">f05c4574ff</text>
<text x="383.7" y="732" textLength="69.4" lengthAdjust="spacingAndGlyphs">f05c4574ff</text>
<text x="383.7" y="753" textLength="69.4" lengthAdjust="spacingAndGlyphs">f05c4574ff</text>
<text x="383.7" y="774" textLength="69.4" lengthAdjust="spacingAndGlyphs">f05c4574ff</text>

<!-- operation -->
<g clip-path="url(#cF)">
<text x="471.4" y="291" textLength="84" lengthAdjust="spacingAndGlyphs">Envoi d'email</text>
<text x="471.4" y="312" textLength="84" lengthAdjust="spacingAndGlyphs">Envoi d'email</text>
<text x="471.4" y="333" textLength="84" lengthAdjust="spacingAndGlyphs">Envoi d'email</text>
<text x="471.4" y="354" textLength="112" lengthAdjust="spacingAndGlyphs">Export d'un dépôt</text>
<text x="471.4" y="375" textLength="112" lengthAdjust="spacingAndGlyphs">Export d'un dépôt</text>
<text x="471.4" y="396" textLength="112" lengthAdjust="spacingAndGlyphs">Export d'un dépôt</text>
<text x="471.4" y="417" textLength="112" lengthAdjust="spacingAndGlyphs">Export d'un dépôt</text>
<text x="471.4" y="438" textLength="112" lengthAdjust="spacingAndGlyphs">Export d'un dépôt</text>
<text x="471.4" y="459" textLength="112" lengthAdjust="spacingAndGlyphs">Export d'un dépôt</text>
<text x="471.4" y="480" textLength="112" lengthAdjust="spacingAndGlyphs">Export d'un dépôt</text>
<text x="471.4" y="501" textLength="112" lengthAdjust="spacingAndGlyphs">Export d'un dépôt</text>
<text x="471.4" y="522" textLength="112" lengthAdjust="spacingAndGlyphs">Export d'un dépôt</text>
<text x="471.4" y="543" textLength="112" lengthAdjust="spacingAndGlyphs">Export d'un dépôt</text>
<text x="471.4" y="564" textLength="112" lengthAdjust="spacingAndGlyphs">Export d'un dépôt</text>
<text x="471.4" y="585" textLength="113" lengthAdjust="spacingAndGlyphs">Envoi de message</text>
<text x="471.4" y="606" textLength="113" lengthAdjust="spacingAndGlyphs">Envoi de message</text>
<text x="471.4" y="627" textLength="113" lengthAdjust="spacingAndGlyphs">Envoi de message</text>
<text x="471.4" y="648" textLength="113" lengthAdjust="spacingAndGlyphs">Envoi de message</text>
<text x="471.4" y="669" textLength="113" lengthAdjust="spacingAndGlyphs">Envoi de message</text>
<text x="471.4" y="690" textLength="113" lengthAdjust="spacingAndGlyphs">Envoi de message</text>
<text x="471.4" y="711" textLength="113" lengthAdjust="spacingAndGlyphs">Envoi de message</text>
<text x="471.4" y="732" textLength="112" lengthAdjust="spacingAndGlyphs">Export d'un dépôt</text>
<text x="471.4" y="753" textLength="81.6" lengthAdjust="spacingAndGlyphs">Changement</text>
<text x="471.4" y="774" textLength="102" lengthAdjust="spacingAndGlyphs">Nouveau  dépôt</text>
</g>

<!-- description -->
<text x="559.6" y="291" textLength="737.4" lengthAdjust="spacingAndGlyphs">[Antoine ADEGNOH] a envoyé le template {template} à l'e-mail [mailys@wiin.io] concernant le depôt [f05c4574ff]</text>
<text x="559.6" y="312" textLength="737.4" lengthAdjust="spacingAndGlyphs">[Antoine ADEGNOH] a envoyé le template {template} à l'e-mail [mailys@wiin.io] concernant le depôt [f05c4574ff]</text>
<text x="559.6" y="333" textLength="709" lengthAdjust="spacingAndGlyphs">[Ruben KPOGO] a envoyé le template {template} à l'e-mail [mailys@wiin.io] concernant le depôt [f05c4574ff]</text>
<text x="559.6" y="354" textLength="435.4" lengthAdjust="spacingAndGlyphs">[Antoine ADEGNOH] a exporté au format [zip] le dépôt [f05c4574ff]</text>
<text x="559.6" y="375" textLength="435.4" lengthAdjust="spacingAndGlyphs">[Antoine ADEGNOH] a exporté au format [zip] le dépôt [f05c4574ff]</text>
<text x="559.6" y="396" textLength="435.4" lengthAdjust="spacingAndGlyphs">[Antoine ADEGNOH] a exporté au format [zip] le dépôt [f05c4574ff]</text>
<text x="559.6" y="417" textLength="435.4" lengthAdjust="spacingAndGlyphs">[Antoine ADEGNOH] a exporté au format [zip] le dépôt [f05c4574ff]</text>
<text x="559.6" y="438" textLength="407.7" lengthAdjust="spacingAndGlyphs">[Mailys Motard] a exporté au format [zip] le dépôt [f05c4574ff]</text>
<text x="559.6" y="459" textLength="525.4" lengthAdjust="spacingAndGlyphs">[Yannis Ekué geoffroy AMOUZOU] a exporté au format [zip] le dépôt [f05c4574ff]</text>
<text x="559.6" y="480" textLength="435.4" lengthAdjust="spacingAndGlyphs">[Antoine ADEGNOH] a exporté au format [zip] le dépôt [f05c4574ff]</text>
<text x="559.6" y="501" textLength="435.4" lengthAdjust="spacingAndGlyphs">[Antoine ADEGNOH] a exporté au format [zip] le dépôt [f05c4574ff]</text>
<text x="559.6" y="522" textLength="435.4" lengthAdjust="spacingAndGlyphs">[Antoine ADEGNOH] a exporté au format [zip] le dépôt [f05c4574ff]</text>
<text x="559.6" y="543" textLength="407.7" lengthAdjust="spacingAndGlyphs">[Mailys Motard] a exporté au format [zip] le dépôt [f05c4574ff]</text>
<text x="559.6" y="564" textLength="407.7" lengthAdjust="spacingAndGlyphs">[Mailys Motard] a exporté au format [zip] le dépôt [f05c4574ff]</text>
<text x="559.6" y="585" textLength="655.4" lengthAdjust="spacingAndGlyphs">[Mailys Motard] a envoyé le message: [Super merci beaucoup !] à [] concernant le dépôt [f05c4574ff]</text>
<text x="559.6" y="606" textLength="609.4" lengthAdjust="spacingAndGlyphs">[Mailys Motard] a envoyé le message: [Ok c'est modifié] à [] concernant le dépôt [f05c4574ff]</text>
<text x="559.6" y="627" textLength="930.4" lengthAdjust="spacingAndGlyphs">[Mailys Motard] a envoyé le message: [Je souhaite modifier mon titre de projet, il y a une faute de frappe] à [] concernant le dépôt [f05c4574ff]</text>
<text x="559.6" y="648" textLength="1336" lengthAdjust="spacingAndGlyphs">[Mailys Motard] a envoyé le message: [Vous avez finalisé votre dossier, vous ne pouvez normalement plus le modifier. Cependant je peux rouvrir votre candidature ou apporter directement les modifications.</text>
<text x="559.6" y="669" textLength="905.4" lengthAdjust="spacingAndGlyphs">[Mailys Motard] a envoyé le message: [Comment je peux retourner sur mon dossier pour le modifier ?] à [] concernant le dépôt [f05c4574ff]</text>
<text x="559.6" y="690" textLength="706.4" lengthAdjust="spacingAndGlyphs">[Mailys Motard] a envoyé le message: [Oui, quelle est votre question ?] à [] concernant le dépôt [f05c4574ff]</text>
<text x="559.6" y="711" textLength="817.1" lengthAdjust="spacingAndGlyphs">[Mailys Motard] a envoyé le message: [Bonjour, j'ai une question, pouvez-vous m'aider?] à [] concernant le dépôt [f05c4574ff]</text>
<text x="559.6" y="732" textLength="435.4" lengthAdjust="spacingAndGlyphs">[Antoine ADEGNOH] a exporté au format [zip] le dépôt [f05c4574ff]</text>
<text x="559.6" y="753" textLength="516.4" lengthAdjust="spacingAndGlyphs">[Mailys Motard] a validé le dépôt [f05c4574ff] à l'étape [Finaliser votre dossier]</text>
<text x="559.6" y="774" textLength="471.4" lengthAdjust="spacingAndGlyphs">[Mailys Motard] à initié un nouveau depôt avec la réference [f05c4574ff]</text>
</g>

<!-- selection -->
<rect x="28" y="253.3" width="88.7" height="20.7" fill="none" stroke="#217346" stroke-width="2"/>
<rect x="114.5" y="272.5" width="5" height="5" fill="#217346" stroke="#fff" stroke-width="1"/>

<!-- scrollbar -->
<rect x="1899" y="233" width="21" height="583" fill="#fff"/>
<rect x="1902.5" y="235.5" width="14.5" height="14.5" fill="#fff" stroke="#a6a6a6"/>
<path fill="#444" d="M1906 245.5h7.5l-3.75-4z"/>
<path shape-rendering="crispEdges" fill="none" stroke="#a6a6a6" stroke-width="2" d="M1903 250V816M1902 251H1917"/>
</svg>
</body>
</html>
